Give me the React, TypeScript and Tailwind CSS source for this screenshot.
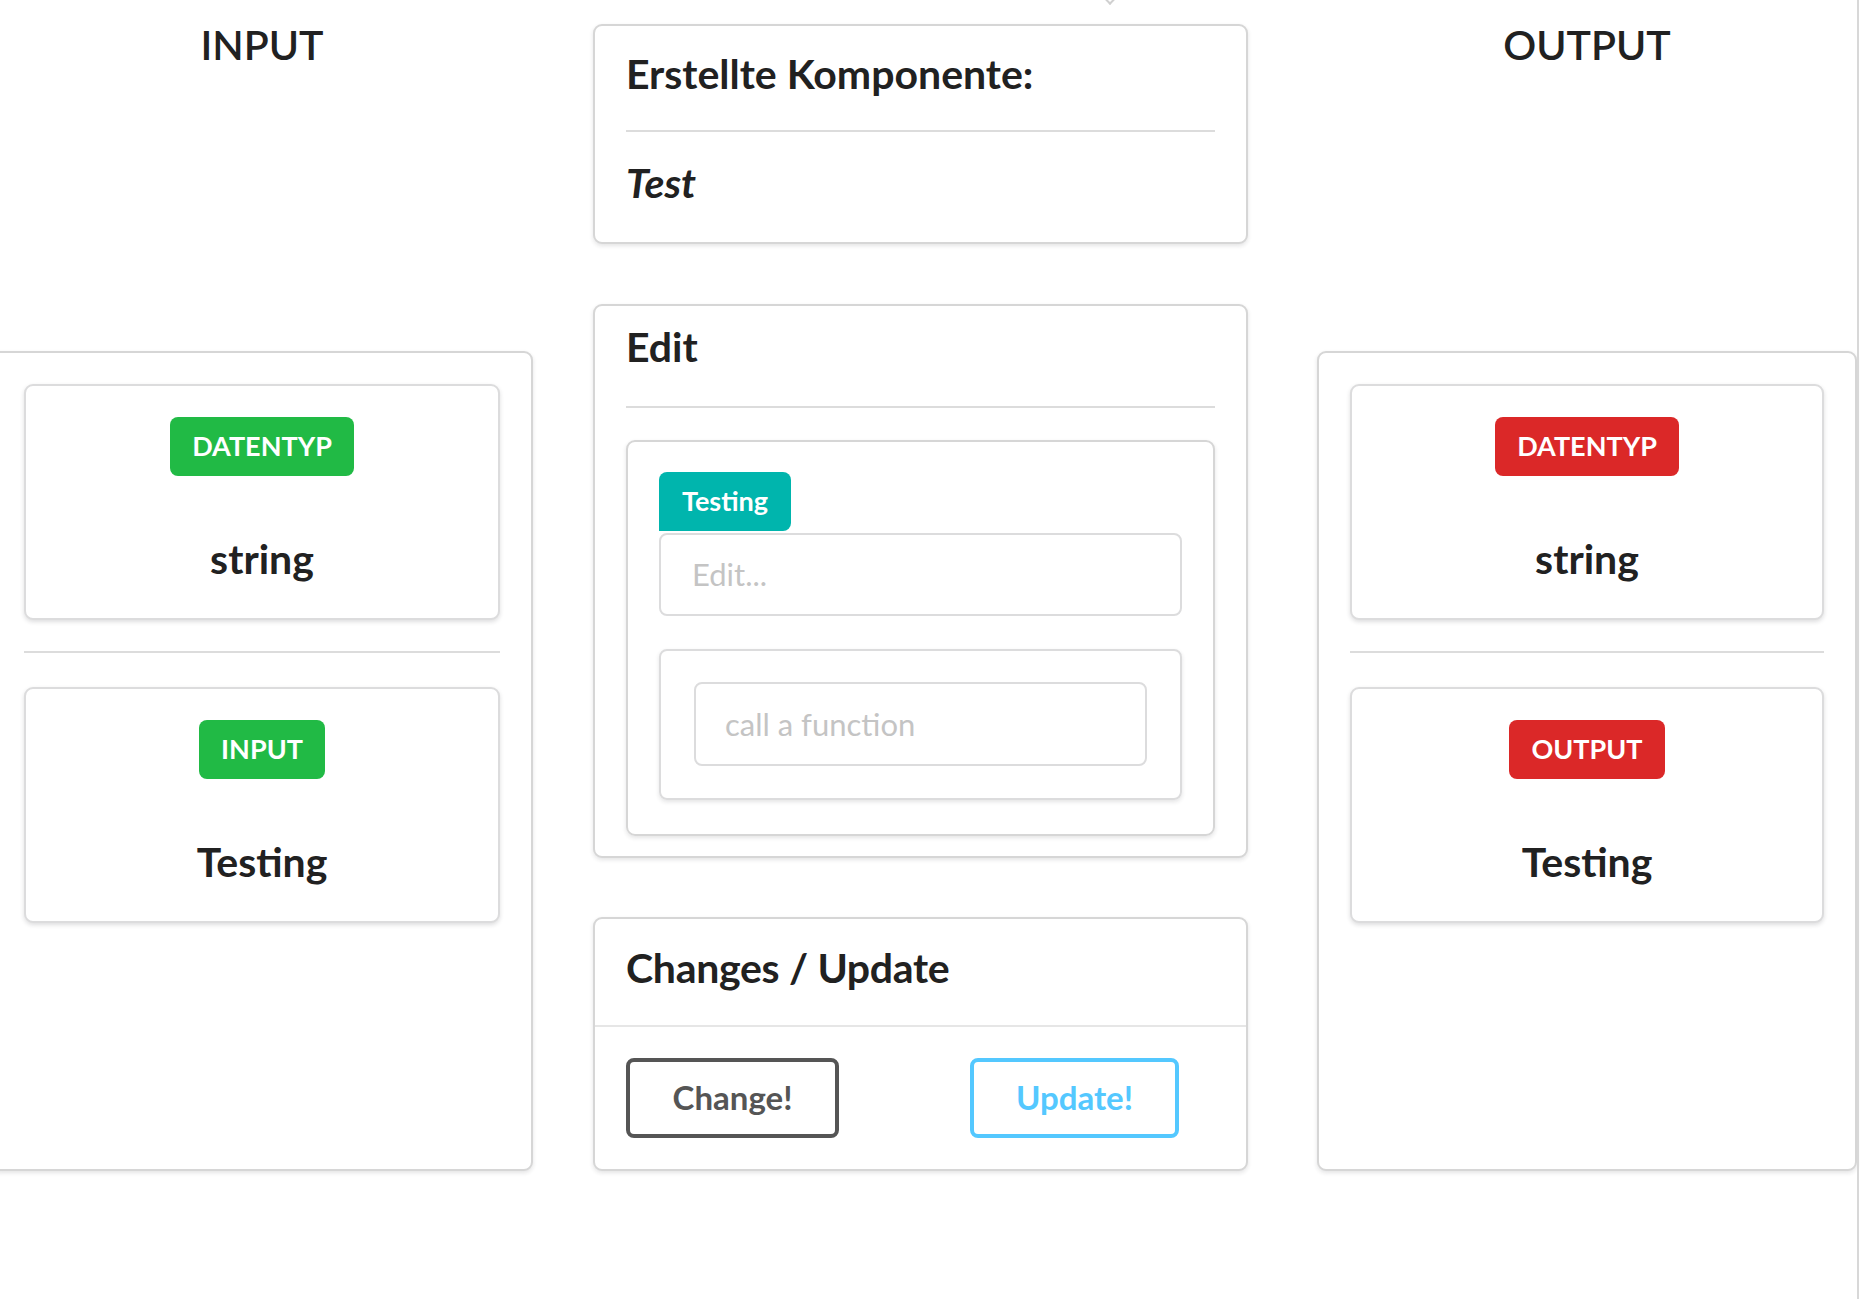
import React from 'react';

const font = "font-['Lato','Open_Sans',sans-serif]";

function Label({ text, color }: { text: string; color: string }) {
  return (
    <span className={`inline-flex items-center h-[59px] px-[22px] rounded-[8px] text-white font-bold text-[27px] ${color}`}>
      {text}
    </span>
  );
}

function ValueCard({ label, color, value }: { label: string; color: string; value: string }) {
  return (
    <div className="h-[236px] bg-white border-2 border-[#dcdcdd] rounded-[9px] shadow-[0_2px_4px_rgba(34,36,38,0.15)] flex flex-col items-center pt-[31px]">
      <Label text={label} color={color} />
      <div className="mt-[62px] text-[41px] leading-none font-bold text-[#212121]">{value}</div>
    </div>
  );
}

function SidePanel({ title, color, ioLabel }: { title: string; color: string; ioLabel: string }) {
  return (
    <div className="flex flex-col">
      <div className="h-[351px] flex justify-center pt-[24px]">
        <h2 className="text-[41px] leading-none font-semibold text-[#212121] h-fit">{title}</h2>
      </div>
      <div className="h-[820px] bg-white border-2 border-[#d6d6d6] rounded-[9px] shadow-[0_2px_4px_rgba(34,36,38,0.12)] px-[31px] pt-[31px]">
        <ValueCard label="DATENTYP" color={color} value="string" />
        <div className="mt-[31px] mb-[34px] h-[2px] bg-[#dcdcdc]" />
        <ValueCard label={ioLabel} color={color} value="Testing" />
      </div>
    </div>
  );
}

export default function App() {
  return (
    <div className={`w-[1860px] h-[1299px] overflow-hidden bg-white relative flex ${font}`}>
      {/* INPUT */}
      <div className="ml-[-9px] w-[542px] shrink-0">
        <SidePanel title="INPUT" color="bg-[#21ba45]" ioLabel="INPUT" />
      </div>

      {/* Mitte */}
      <div className="ml-[60px] w-[655px] shrink-0 pt-[24px] flex flex-col relative">
        {/* kleiner Pfeil oben */}
        <div className="absolute top-[-12px] left-[510px] w-[14px] h-[14px] rotate-45 border-r-2 border-b-2 border-[#d0d0d0] bg-white" />

        <div className="h-[220px] bg-white border-2 border-[#d6d6d6] rounded-[9px] shadow-[0_2px_4px_rgba(34,36,38,0.12)] px-[31px] pt-[20px]">
          <h3 className="text-[41px] leading-[56px] font-bold text-[#212121]">Erstellte Komponente:</h3>
          <div className="mt-[28px] h-[2px] bg-[#dcdcdc]" />
          <div className="mt-[23px] text-[41px] leading-[56px] font-bold italic text-[#212121]">Test</div>
        </div>

        <div className="mt-[60px] h-[554px] bg-white border-2 border-[#d6d6d6] rounded-[9px] shadow-[0_2px_4px_rgba(34,36,38,0.12)] px-[31px] pt-[13px]">
          <h3 className="text-[41px] leading-[56px] font-bold text-[#212121]">Edit</h3>
          <div className="mt-[31px] h-[2px] bg-[#dcdcdc]" />
          <div className="mt-[32px] h-[396px] border-2 border-[#d6d6d6] rounded-[9px] shadow-[0_2px_4px_rgba(34,36,38,0.12)] px-[31px] pt-[30px]">
            <div className="inline-flex items-center h-[59px] px-[23px] rounded-t-[8px] rounded-br-[8px] bg-[#00b5ad] text-white font-bold text-[27px]">
              Testing
            </div>
            <div className="mt-[2px] h-[83px] border-2 border-[#dcdcdd] rounded-[8px] flex items-center px-[31px] text-[31px] text-[#c4c4c4]">
              Edit...
            </div>
            <div className="mt-[33px] h-[151px] border-2 border-[#dcdcdd] rounded-[8px] shadow-[0_2px_4px_rgba(34,36,38,0.12)] px-[33px] pt-[31px]">
              <div className="h-[84px] border-2 border-[#dcdcdd] rounded-[8px] flex items-center px-[29px] text-[31px] text-[#c4c4c4]">
                call a function
              </div>
            </div>
          </div>
        </div>

        <div className="mt-[59px] h-[254px] bg-white border-2 border-[#d6d6d6] rounded-[9px] shadow-[0_2px_4px_rgba(34,36,38,0.12)] flex flex-col">
          <div className="h-[106px] px-[31px] pb-[10px] flex items-center">
            <h3 className="text-[41px] leading-none font-bold text-[#212121] tracking-[-0.3px]">Changes / Update</h3>
          </div>
          <div className="h-[2px] bg-[#e6e6e6]" />
          <div className="flex px-[31px] pt-[31px] gap-[131px]">
            <button className="w-[213px] h-[80px] border-[4px] border-[#555555] rounded-[8px] text-[33px] font-bold text-[#555555]">
              Change!
            </button>
            <button className="w-[209px] h-[80px] border-[4px] border-[#54c8ff] rounded-[8px] text-[33px] font-bold text-[#54c8ff]">
              Update!
            </button>
          </div>
        </div>
      </div>

      {/* OUTPUT */}
      <div className="ml-[69px] w-[540px] shrink-0">
        <SidePanel title="OUTPUT" color="bg-[#db2828]" ioLabel="OUTPUT" />
      </div>

      <div className="w-[3px] h-full border-l-2 border-[#d8d8d8]" />
    </div>
  );
}
